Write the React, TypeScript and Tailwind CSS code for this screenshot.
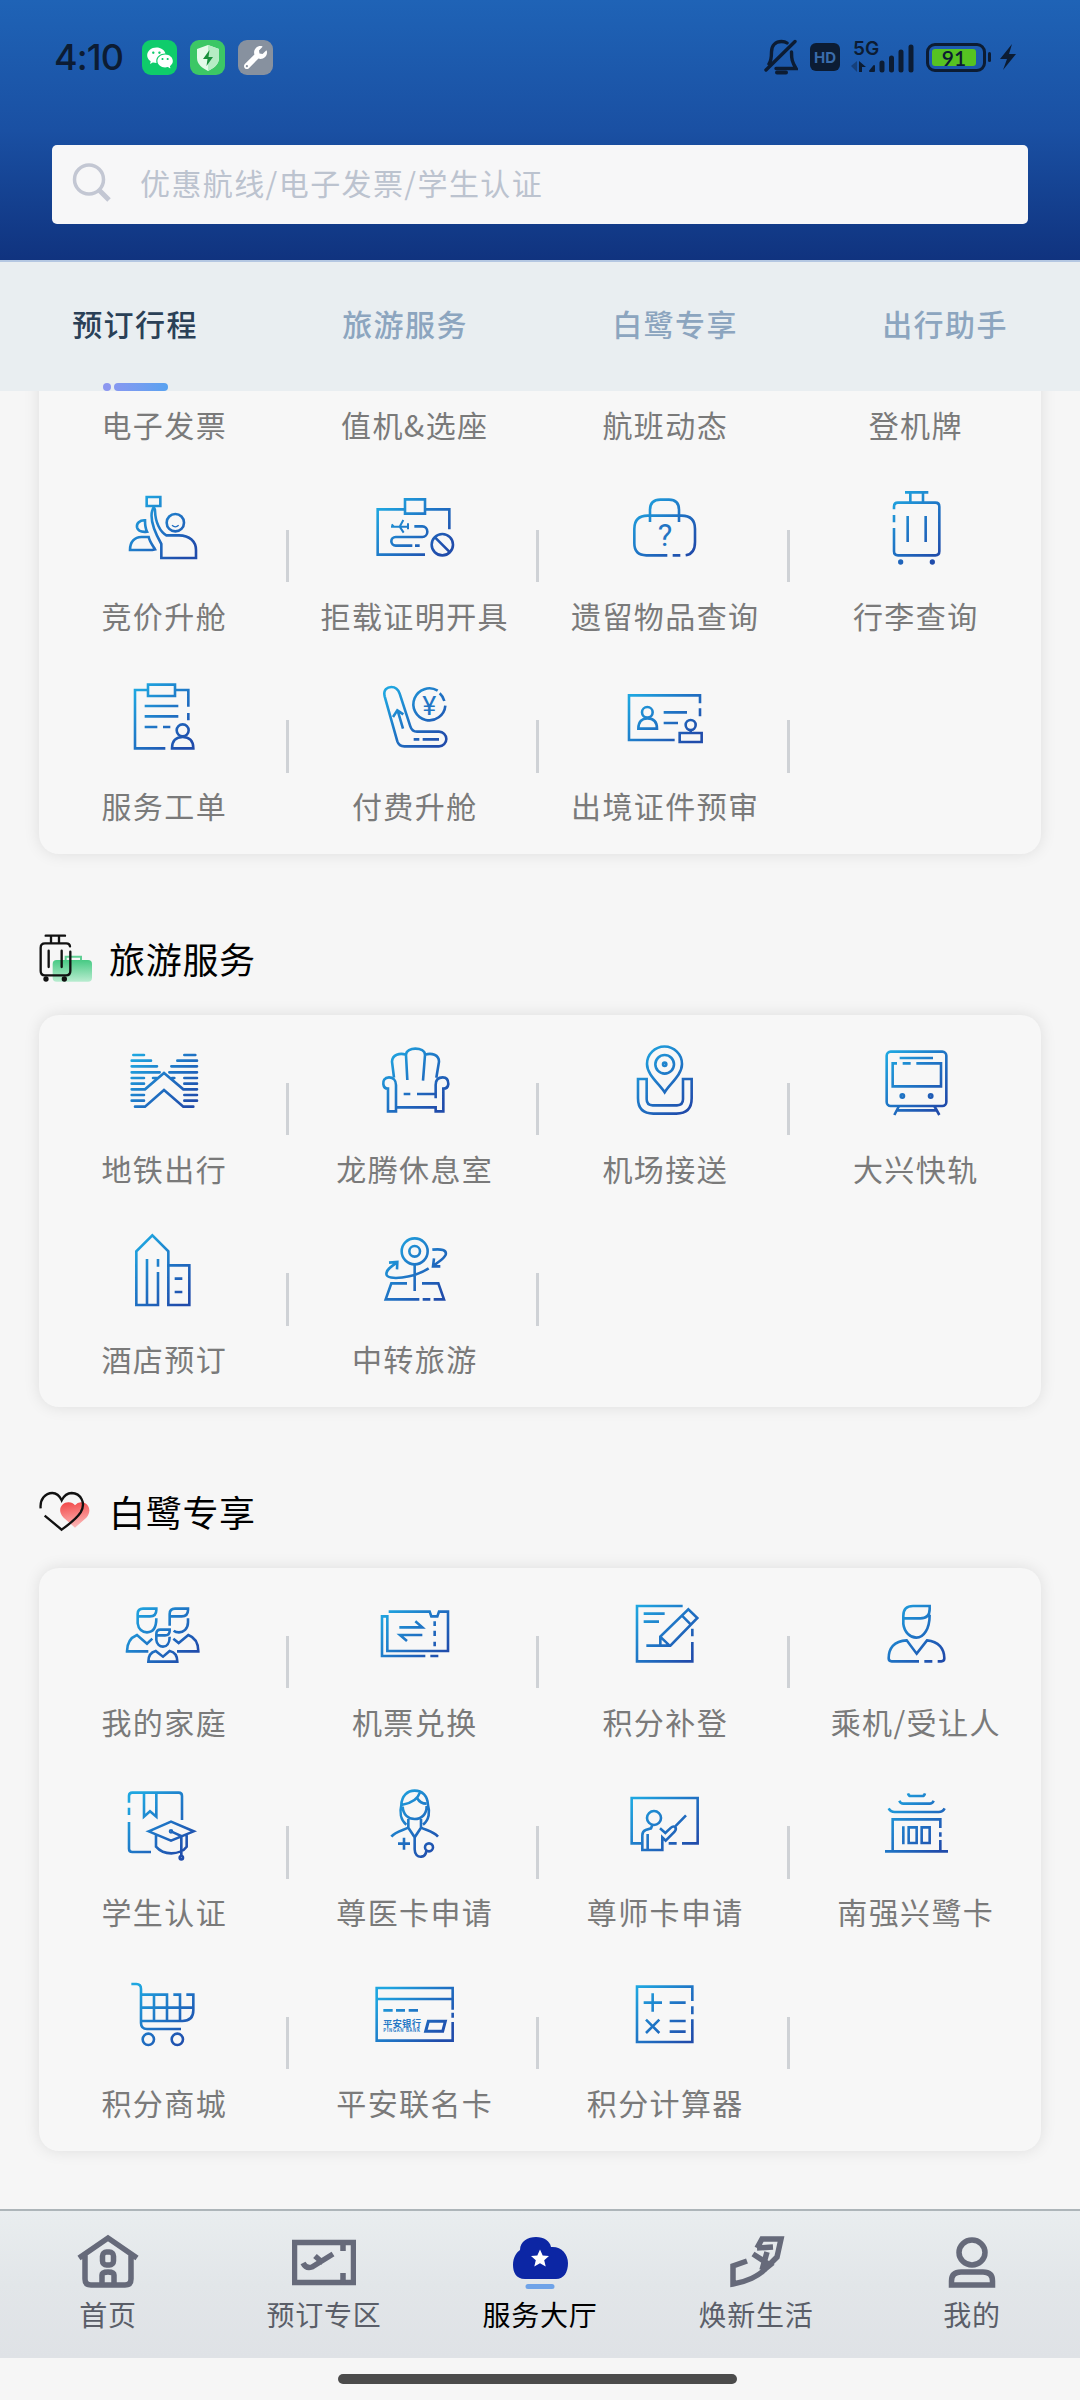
import React, { useId } from "react";
import { RiWechatFill } from "react-icons/ri";
import { FaWrench } from "react-icons/fa";

type GlyphProps = { x: number; y: number; children?: React.ReactNode };

/* 80px line icon, 3 units per pixel, shared cyan to blue gradient */
function Glyph({ x, y, children }: GlyphProps) {
  const id = useId();
  return (
    <svg
      viewBox={`${x} ${y} 240 240`}
      className="h-20 w-20"
      fill="none"
      stroke={`url(#${id})`}
      strokeWidth="7.800"
    >
      <defs>
        <linearGradient
          id={id}
          gradientUnits="userSpaceOnUse"
          x1={x + 35}
          y1={y + 40}
          x2={x + 190}
          y2={y + 200}
        >
          <stop offset="0" stopColor="#1fa6e0" />
          <stop offset="0.5" stopColor="#1f76c6" />
          <stop offset="1" stopColor="#204cab" />
        </linearGradient>
      </defs>
      {children}
    </svg>
  );
}

const icons: Record<string, React.ReactNode> = {
  bid: (
    <Glyph x={313} y={84}>
      <path d="M381 111h41v27h-41zM425 294V252C404 215 389 180 398 150C400 142 406 142 406 152C407 188 422 216 440 226H478C510 226 529 245 529 270V294Z" />
      <path d="M376 181C360 180 350 190 352 202C355 213 365 217 382 215C377 205 376 195 376 181zM331 270C331 245 345 231 365 231H387C390 245 400 258 406 268L398 270Z" />
      <circle cx="467" cy="188" r="26" />
      <path d="M457 196q10 9 20 0" strokeWidth="4" />
    </Glyph>
  ),
  denied: (
    <Glyph x={1064} y={84}>
      <path d="M1154 148H1072V284H1214M1214 148H1287V208M1154 118h60v43h-60z" />
      <path d="M1182 199H1206a15 16 0 0 1 0 32H1126a13 13 0 0 0 0 26H1176M1184 257h14" />
      <path d="M1112 200H1164M1149 180L1138 200L1150 218M1114 193l7 7M1163 190v18" strokeWidth="6" />
      <circle cx="1266" cy="254" r="32" />
      <path d="M1244 232L1289 277" />
    </Glyph>
  ),
  lost: (
    <Glyph x={256} y={84}>
      <path d="M331 186V150Q331 119 362 119H388Q418 119 418 150V186M383 286H320Q284 286 284 250V207Q284 167 324 167H426Q466 167 466 207V246Q466 282 438 286M399 286h23" />
      <text
        x="376"
        y="257"
        textAnchor="middle"
        fontSize="92"
        fill="#2275c4"
        stroke="none"
        className="font-[Roboto,sans-serif]"
      >
        ?
      </text>
    </Glyph>
  ),
  luggage: (
    <Glyph x={1007} y={84}>
      <path d="M1094 97h70M1110 97v29M1148 97v29M1061 148V140Q1061 128 1073 128H1185Q1197 128 1197 140V274Q1197 286 1185 286H1073Q1061 286 1061 274V204M1061 165v22M1102 168v78M1156 168v78" />
      <circle cx="1081" cy="306" r="4" />
      <circle cx="1176" cy="306" r="4" />
    </Glyph>
  ),
  order: (
    <Glyph x={313} y={655}>
      <path d="M385 675h81v34h-81zM385 691H346V866H437M466 691H506V741M506 760v22M375 739h101M375 770h101M375 802h38M430 802h22" />
      <circle cx="489" cy="812" r="18" />
      <path d="M457 866C457 843 470 832 489 832C508 832 521 843 521 866Z" />
    </Glyph>
  ),
  upgrade: (
    <Glyph x={1064} y={655}>
      <path d="M1093 710C1088 690 1101 682 1113 682C1127 682 1134 690 1138 702L1170 800Q1175 816 1190 816H1256A22 22 0 0 1 1256 860H1152Q1136 860 1131 845ZM1148 807L1132 753M1118 772L1131 752L1149 764M1180 839h17M1207 839h49" />
      <path d="M1275 738A48 48 0 1 1 1252 693M1258 701A48 48 0 0 1 1272 724" />
      <text
        x="1227"
        y="767"
        textAnchor="middle"
        fontSize="80"
        fill="#2275c4"
        stroke="none"
        className="font-[Roboto,sans-serif]"
      >
        ¥
      </text>
    </Glyph>
  ),
  permit: (
    <Glyph x={256} y={655}>
      <path d="M405 841H268V707H481V731M481 746v24M372 758h70M372 790h43M453 811v9M420 820h66v27h-66z" />
      <circle cx="323" cy="758" r="16" />
      <circle cx="453" cy="796" r="15" />
      <path d="M296 807C296 785 308 776 323 776C340 776 352 785 352 807Z" />
    </Glyph>
  ),
  metro: (
    <Glyph x={313} y={393}>
      <path
        strokeLinecap="round"
        d="M341 435H373M494 435H527M336 452H394M473 452H532M336 469H412M455 469H532M336 487H420M449 487H532M336 504H373M400 504H412M494 504H532M457 504H464M336 521H373M494 521H532M336 538H376L433 489L491 538H532M336 555H373M494 555H532M336 572H373M494 572H532M346 590H376L433 540L491 590H521"
      />
    </Glyph>
  ),
  lounge: (
    <Glyph x={1064} y={393}>
      <path d="M1161 510L1157 435C1157 422 1172 416 1185 416C1200 416 1214 422 1214 435L1208 512M1157 434C1138 428 1116 434 1115 455L1121 503M1214 434C1234 428 1256 434 1256 455L1248 503" />
      <path d="M1127 604V525C1127 510 1118 502 1106 502C1092 502 1088 512 1089 522C1090 532 1096 536 1103 536V604ZM1246 565V525C1246 508 1256 502 1267 502C1280 502 1284 512 1284 522C1283 532 1276 536 1269 536V604H1246V592H1127M1150 552h20M1190 552h56" />
    </Glyph>
  ),
  pickup: (
    <Glyph x={256} y={123}>
      <path d="M375 277C360 252 322 225 322 192A52 52 0 0 1 427 192C427 225 390 252 375 277ZM321 237H295V295Q295 341 341 341H410Q456 341 456 295V237H430V298Q430 316 412 316H339Q321 316 321 298Z" />
      <circle cx="375" cy="193" r="28" />
      <circle cx="375" cy="193" r="5" />
    </Glyph>
  ),
  train: (
    <Glyph x={1007} y={123}>
      <rect x="1039" y="155" width="179" height="163" rx="12" />
      <path d="M1078 174h100M1070 190H1057V259H1202V190H1128M1087 190h24M1076 318l-14 27M1182 318l15 27M1070 331h118" />
      <circle cx="1086" cy="288" r="5" />
      <circle cx="1171" cy="288" r="5" />
    </Glyph>
  ),
  hotel: (
    <Glyph x={313} y={965}>
      <path d="M415 1088V1187H350V1026L398 978L446 1026V1187H509V1068H446M382 1049V1187M415 1049v23M465 1108h23M465 1148h23" />
    </Glyph>
  ),
  transfer: (
    <Glyph x={1064} y={965}>
      <circle cx="1183" cy="1026" r="39" />
      <circle cx="1183" cy="1026" r="16" />
      <path d="M1183 1066V1145M1160 1122H1113L1096 1170H1197M1207 1170h23M1240 1170H1271L1254 1122H1205M1225 1077C1180 1106 1100 1116 1098 1094C1098 1080 1115 1070 1129 1060M1106 1060L1131 1058L1130 1080M1236 1021C1264 1018 1280 1022 1276 1036C1270 1050 1252 1058 1240 1069M1241 1047L1238 1071H1260" />
    </Glyph>
  ),
  family: (
    <Glyph x={313} y={370}>
      <path d="M354 437V430Q354 414 370 414H410V418Q410 437 391 437H354V458C356 475 368 485 382 485C400 485 410 470 410 443M386 542H322C322 515 335 500 352 493L382 519L398 504" />
      <path d="M450 465V430Q450 414 466 414H505V418Q505 437 486 437H450M505 443V455C505 475 491 485 478 485Q468 485 462 480M461 504L477 517L506 493C525 500 536 515 536 542H472" />
      <path d="M410 495V490Q410 477 422 477H450V480Q450 494 436 494H410V508C411 520 420 528 430 528C441 528 450 518 450 498M386 573C386 553 396 544 408 541L430 558L450 541C464 544 473 554 473 573Z" />
    </Glyph>
  ),
  ticket: (
    <Glyph x={1064} y={370}>
      <path d="M1105 423H1228L1233 437H1251L1256 423H1283V541H1101V437H1085V556H1215M1230 556h24M1243 452v14M1243 480v16M1243 513v14" />
      <path d="M1137 470H1206L1185 452M1206 493H1139L1160 511" />
    </Glyph>
  ),
  makeup: (
    <Glyph x={256} y={160}>
      <path d="M429 196H292V362H458V304M458 264v23M312 219h63M312 243h46M320 315H392L473 232L446 206L362 288V315M427 225L453 251M364 290l25 24" />
    </Glyph>
  ),
  person: (
    <Glyph x={1007} y={160}>
      <path d="M1089 233V225Q1089 196 1118 196H1168V205Q1168 233 1140 233H1089V250C1092 275 1110 291 1128 291C1150 291 1168 265 1168 222" />
      <path d="M1136 362H1054Q1045 362 1045 353C1045 325 1060 300 1099 299L1129 339L1160 299C1195 302 1212 325 1212 353Q1212 362 1203 362H1192M1152 362h24" />
    </Glyph>
  ),
  student: (
    <Glyph x={313} y={942}>
      <path d="M328 998V978Q328 968 338 968H477Q487 968 487 978V1050M328 1013v22M328 1056V1136Q328 1146 338 1146H394M373 968V1040L391 1024L410 1040V968M387 1084L454 1055L522 1084L454 1112ZM409 1096V1130C420 1143 435 1150 455 1150C472 1150 492 1143 501 1130V1096M454 1084L485 1098V1160" />
      <circle cx="454" cy="1084" r="3" />
      <circle cx="485" cy="1163" r="5" />
    </Glyph>
  ),
  doctor: (
    <Glyph x={1064} y={942}>
      <path d="M1158 1064C1140 1050 1138 1025 1143 1005C1144 978 1161 962 1183 962C1206 962 1222 978 1223 1005C1229 1025 1227 1050 1208 1064M1147 1010C1148 1034 1164 1047 1183 1047C1203 1047 1219 1034 1219 1008M1146 1004C1170 1000 1192 988 1199 967M1190 984Q1200 1001 1218 1001" />
      <path d="M1113 1100C1125 1085 1145 1082 1164 1073V1047M1253 1100C1240 1085 1222 1082 1202 1073V1047M1164 1073L1183 1102L1202 1073M1183 1102V1138C1183 1154 1192 1161 1203 1160C1214 1159 1217 1151 1218 1143M1133 1121h36M1151 1103v36" />
      <circle cx="1226" cy="1132" r="12" />
    </Glyph>
  ),
  teacher: (
    <Glyph x={256} y={732}>
      <path d="M305 910H276V774H474V910H427M387 910h24M324 882v48M338 855L334 865L318 870Q308 874 308 886V930H368V892L378 902L404 876Q412 866 406 861Q400 857 394 863L377 879L361 865M406 860L439 826" />
      <circle cx="343" cy="834" r="21" />
    </Glyph>
  ),
  temple: (
    <Glyph x={1007} y={732}>
      <path d="M1103 760q2 8 8 8h35q6 0 8-8M1077 782q4 9 12 9h79q8 0 12-9M1045 805q6 11 18 11h132q12 0 18-11M1057 934V838H1200V864M1200 877v13M1200 900V934M1034 934H1223M1089 859v54M1105 862h24v47h-24zM1144 862h24v47h-24z" />
    </Glyph>
  ),
  cart: (
    <Glyph x={313} y={344}>
      <path d="M335 371H350Q364 371 364 386V488Q364 506 382 506H484M364 403H442V482M364 482H488Q521 482 521 450V403H500M461 403H481V482M364 442H521M403 403V482" />
      <circle cx="386" cy="537" r="17" />
      <circle cx="473" cy="537" r="17" />
    </Glyph>
  ),
  bankcard: (
    <Glyph x={1064} y={344}>
      <path d="M1297 448V383H1069V541H1297V485M1297 457v15M1069 416H1297M1089 450h28M1127 450h27M1165 450h28" />
      <path d="M1224 483H1275L1267 513H1216Z" strokeWidth="9" />
      <g
        fill="#2477c5"
        stroke="none"
        className="font-['Noto_Sans_CJK_SC',sans-serif] font-bold"
      >
        <text x="1088" y="499" fontSize="28" textLength="114">
          平安银行
        </text>
        <text x="1089" y="515" fontSize="13" textLength="110">
          PINGAN BANK
        </text>
      </g>
    </Glyph>
  ),
  calculator: (
    <Glyph x={256} y={104}>
      <path d="M458 182V139H292V305H458V237M458 198v24M312 187h55M339 159v55M390 187h48M319 238l40 40M359 238l-40 40M390 242h48M390 274h48" />
    </Glyph>
  ),
};

type Item = { label: string; icon?: string };

const bookingItems: Item[] = [
  { label: "电子发票" },
  { label: "值机&选座" },
  { label: "航班动态" },
  { label: "登机牌" },
  { label: "竞价升舱", icon: "bid" },
  { label: "拒载证明开具", icon: "denied" },
  { label: "遗留物品查询", icon: "lost" },
  { label: "行李查询", icon: "luggage" },
  { label: "服务工单", icon: "order" },
  { label: "付费升舱", icon: "upgrade" },
  { label: "出境证件预审", icon: "permit" },
];

const travelItems: Item[] = [
  { label: "地铁出行", icon: "metro" },
  { label: "龙腾休息室", icon: "lounge" },
  { label: "机场接送", icon: "pickup" },
  { label: "大兴快轨", icon: "train" },
  { label: "酒店预订", icon: "hotel" },
  { label: "中转旅游", icon: "transfer" },
];

const memberItems: Item[] = [
  { label: "我的家庭", icon: "family" },
  { label: "机票兑换", icon: "ticket" },
  { label: "积分补登", icon: "makeup" },
  { label: "乘机/受让人", icon: "person" },
  { label: "学生认证", icon: "student" },
  { label: "尊医卡申请", icon: "doctor" },
  { label: "尊师卡申请", icon: "teacher" },
  { label: "南强兴鹭卡", icon: "temple" },
  { label: "积分商城", icon: "cart" },
  { label: "平安联名卡", icon: "bankcard" },
  { label: "积分计算器", icon: "calculator" },
];

function ServiceCard({ items }: { items: Item[] }) {
  return (
    <div className="mx-[39px] grid grid-cols-4 rounded-[20px] bg-[#f7f7f7] pb-[11.5px] shadow-[0_0_16px_rgba(0,0,0,0.1)]">
      {items.map((item, i) => (
        <div key={item.label} className="flex h-[190.5px]">
          <div className="flex w-full flex-col items-center pt-[26px]">
            <div className="h-20 w-20">{item.icon && icons[item.icon]}</div>
            <span className="mt-[31px] text-3xl leading-8 tracking-[1.4px] whitespace-nowrap text-[#7a7a7a]">
              {item.label}
            </span>
          </div>
          {i % 4 !== 3 && item.icon && (
            <div className="mt-[68px] mr-px -ml-[4px] h-[52.5px] w-[3px] shrink-0 bg-[#cfd2d6]" />
          )}
        </div>
      ))}
    </div>
  );
}

function SectionTitle({ icon, title }: { icon: React.ReactNode; title: string }) {
  return (
    <div className="flex h-[160.5px] items-center pt-[48px] pl-[39px]">
      {icon}
      <h2 className="ml-[15px] text-4xl leading-[54px] tracking-[0.7px] text-black">
        {title}
      </h2>
    </div>
  );
}

const TravelIcon = (
  <svg viewBox="57 70 165 150" className="h-[50px] w-[55px]" fill="none">
    <defs>
      <linearGradient id="bag" x1="0" y1="0" x2="0" y2="1">
        <stop offset="0" stopColor="#47ca84" />
        <stop offset="1" stopColor="#b9ecd0" />
      </linearGradient>
    </defs>
    <rect x="98" y="151" width="118" height="65" rx="12" fill="url(#bag)" />
    <path d="M137 152V141H183V152" stroke="#5fcf94" strokeWidth="6" />
    <path
      d="M77 78H135M93 80V98M117 80V98M150 110Q149 101 139 101H75Q62 101 62 114V184Q62 197 75 197H138Q151 197 151 184V126M86 123V172M125 123V172"
      stroke="#111"
      strokeWidth="7"
      strokeLinecap="round"
    />
    <circle cx="78" cy="208" r="8" fill="#111" />
    <circle cx="133" cy="208" r="8" fill="#111" />
  </svg>
);

const HeartIcon = (
  <svg viewBox="57 58 165 150" className="h-[50px] w-[55px]" fill="none">
    <defs>
      <linearGradient id="heart" x1="0" y1="0" x2="0.2" y2="1">
        <stop offset="0" stopColor="#f24545" />
        <stop offset="1" stopColor="#fbb3b3" />
      </linearGradient>
    </defs>
    <path
      d="M165 183L131 153C108 130 127 106 146 107Q158 107 165 116Q173 106 185 107C206 108 217 133 199 153Z"
      fill="url(#heart)"
    />
    <path
      d="M62 125C59 98 76 79 97 79Q115 79 125 101Q136 79 155 79C182 80 199 108 182 137Q168 158 125 189L74 147"
      stroke="#111"
      strokeWidth="7"
    />
  </svg>
);

function StatusBar() {
  return (
    <div className="flex h-[75px] items-end justify-between pr-[64px] pl-[54px] text-[#0c1c33]">
      <div className="flex items-center">
        <span className="w-[88px] font-[Inter,sans-serif] text-[36px] leading-[35px] font-medium tracking-[-0.9px]">
          4:10
        </span>
        <div className="flex gap-[13px]">
          <div className="flex h-[35px] w-[35px] items-center justify-center rounded-[9px] bg-[#0fcc6b] text-white">
            <RiWechatFill size={28} />
          </div>
          <div className="flex h-[35px] w-[35px] items-center justify-center rounded-[9px] bg-[#3cc765]">
            <svg viewBox="0 0 24 26" className="h-[26px] w-6">
              <path d="M12 0L23 4V13C23 19 18 23 12 26C6 23 1 19 1 13V4Z" fill="#e4fae9" />
              <path d="M12 0L23 4V13C23 19 18 23 12 26Z" fill="#b5ecc4" />
              <path d="M13.500 5L7 14H11.500L10.500 21L17 12H12.500Z" fill="#188f3c" />
            </svg>
          </div>
          <div className="flex h-[35px] w-[35px] items-center justify-center rounded-[9px] bg-[#87919f] text-white">
            <FaWrench size={23} />
          </div>
        </div>
      </div>
      <div className="flex items-center">
        <svg viewBox="0 0 34 36" className="h-9 w-[34px]" fill="none" stroke="currentColor">
          <path
            d="M5 25C7 22 7.500 19 7.500 13C7.500 6 12 2.500 17.500 2.500Q21 2.500 23 4M27.500 13C27.500 20 28 23 32 29.500H12M2 31L31 2.500"
            strokeWidth="3.400"
            strokeLinecap="round"
          />
          <path d="M13 33.500h9" strokeWidth="4" strokeLinecap="round" />
        </svg>
        <div className="ml-[12px] flex h-[28px] w-[30px] items-center justify-center rounded-md bg-current">
          <span className="font-[Inter,sans-serif] text-[15px] leading-none font-bold text-[#3a6cab]">
            HD
          </span>
        </div>
        <div className="ml-[12px] flex h-9 w-[62px] flex-col">
          <span className="-mt-0.5 ml-px h-[18px] w-9 font-[Inter,sans-serif] text-[19px] leading-[24px] font-semibold">
            5G
          </span>
          <svg
            viewBox="0 16 62 20"
            className="h-5 w-[62px] overflow-visible"
            fill="currentColor"
          >
            <path d="M5 22V33L-1 27Z" opacity="0.4" />
            <path d="M7 22L14 28H10V33H7Z" />
            <path d="M18 32L22 27V32Z" stroke="currentColor" strokeWidth="2" strokeLinejoin="round" />
            <path
              d="M30 24V31M39.500 19V31M49 13V31M59 8V31"
              stroke="currentColor"
              strokeWidth="5"
              strokeLinecap="round"
            />
          </svg>
        </div>
        <div className="ml-[12px] flex h-[29px] w-[60px] rounded-[9px] border-[3px] border-current p-[3px]">
          <div className="flex h-full w-11 items-center justify-center rounded-[3px] bg-[#56c322]">
            <span className="font-[Lato,sans-serif] text-[21px] leading-none font-semibold">91</span>
          </div>
        </div>
        <div className="ml-[2px] h-2.5 w-[3px] rounded-full bg-current" />
        <svg viewBox="0 0 16 28" className="ml-[9px] h-7 w-4" fill="currentColor">
          <path d="M12 1L0 16H7L3 27L16 11H9Z" />
        </svg>
      </div>
    </div>
  );
}

const tabs = ["预订行程", "旅游服务", "白鹭专享", "出行助手"];

const navItems = [
  {
    label: "首页",
    icon: (
      <>
        <path d="M3 24L32 4L61 24M9 20V45Q9 51 15 51H49Q55 51 55 45V20" />
        <rect x="26.500" y="18" width="11" height="13" rx="4" />
        <path d="M26 51V41Q26 38 32 38Q38 38 38 41V51" />
      </>
    ),
  },
  {
    label: "预订专区",
    icon: (
      <>
        <path d="M2.500 8.500H61.500V48.500H2.500Z" />
        <path d="M51 8V17M51 49V39M11 29Q14 35 20 33L41 20M23 22L31 29" />
      </>
    ),
  },
  {
    label: "服务大厅",
    icon: (
      <>
        <path
          d="M17 45C8 45 5 38 5 31C5 23 9 18 12 16C12 7 20 3 28 3C36 3 42 7 43 13C53 12 60 20 60 29C60 38 56 45 48 45Z"
          fill="#0c26a4"
          stroke="none"
        />
        <path
          d="M32 15.500L34.700 21.400L41 22L36.200 26.200L37.700 32.500L32 29.200L26.300 32.500L27.800 26.200L23 22L29.300 21.400Z"
          fill="#fff"
          stroke="none"
        />
        <path d="M20 52.500H44" stroke="#6fa3e8" strokeWidth="5" strokeLinecap="round" />
      </>
    ),
  },
  {
    label: "焕新生活",
    icon: (
      <>
        <path d="M33 14L38 5H57L53 23L44 32M33 14L49 13M29 20L46 31L40 36M43 18L38 36" />
        <path d="M23 27L9 32V50C22 48 35 42 41 35" />
      </>
    ),
  },
  {
    label: "我的",
    icon: (
      <>
        <ellipse cx="32" cy="18.500" rx="13" ry="12.500" />
        <path d="M11.500 51V47Q11.500 38 21 38H43Q52.500 38 52.500 47V51Z" />
      </>
    ),
  },
];

function App() {
  return (
    <div className="flex h-[2400px] w-[1080px] flex-col overflow-hidden bg-[#f6f6f6] font-['Noto_Sans_CJK_SC',sans-serif]">
      <header className="h-[260px] shrink-0 bg-linear-to-b from-[#1f63b6] via-[#1a50a3] to-[#10337f]">
        <StatusBar />
        <div className="mx-[52px] mt-[70px] flex h-[79px] items-center rounded-[5px] bg-[#f7f7f8] pb-[3px] pl-[20px]">
          <svg viewBox="0 0 40 40" className="h-10 w-10" fill="none" stroke="#c3c7d3">
            <circle cx="17" cy="16.500" r="14.500" strokeWidth="3.500" />
            <path d="M27 27L37 37" strokeWidth="5" />
          </svg>
          <span className="mb-[2px] ml-[28px] text-3xl leading-8 tracking-[1.4px] text-[#bcc3cf]">
            优惠航线/电子发票/学生认证
          </span>
        </div>
      </header>

      <nav className="grid h-[131px] shrink-0 grid-cols-4 border-t-2 border-[#b4c7e2] bg-[#e9eef1]">
        {tabs.map((tab, i) => (
          <div key={tab} className="flex flex-col items-center justify-between pt-[43px]">
            <span
              className={
                i === 0
                  ? "text-3xl leading-9 font-medium tracking-[1.4px] text-[#2a4057]"
                  : "text-3xl leading-9 font-medium tracking-[1.4px] text-[#8ca5bf]"
              }
            >
              {tab}
            </span>
            {i === 0 && (
              <div className="flex gap-[3px]">
                <div className="h-2 w-2 rounded-full bg-[#8c97f0]" />
                <div className="h-2 w-[54px] rounded-full bg-linear-to-r from-[#8698f1] to-[#58a2f0]" />
              </div>
            )}
          </div>
        ))}
      </nav>

      <main className="h-[1818px] shrink-0 overflow-hidden">
        <div className="-mt-[120px]">
          <ServiceCard items={bookingItems} />
          <SectionTitle icon={TravelIcon} title="旅游服务" />
          <ServiceCard items={travelItems} />
          <SectionTitle icon={HeartIcon} title="白鹭专享" />
          <ServiceCard items={memberItems} />
        </div>
      </main>

      <footer className="grid h-[149px] shrink-0 grid-cols-5 border-t-2 border-[#adb5b9] bg-linear-to-b from-[#e9edef] via-[#e2e6e9] to-[#dfe2e6]">
        {navItems.map((item, i) => (
          <div key={item.label} className="flex flex-col items-center pt-[23px]">
            <svg
              viewBox="0 0 64 56"
              className="h-14 w-16"
              fill="none"
              stroke="#666a7a"
              strokeWidth="5.500"
            >
              {item.icon}
            </svg>
            <span
              className={
                i === 2
                  ? "mt-[8px] text-[28px] leading-8 tracking-[0.8px] text-black"
                  : "mt-[8px] text-[28px] leading-8 tracking-[0.8px] text-[#5a5e68]"
              }
            >
              {item.label}
            </span>
          </div>
        ))}
      </footer>
      <div className="flex flex-1 justify-center pt-4 pr-[5px]">
        <div className="h-2.5 w-[399px] rounded-full bg-[#4b4b4b]" />
      </div>
    </div>
  );
}

export default App;
